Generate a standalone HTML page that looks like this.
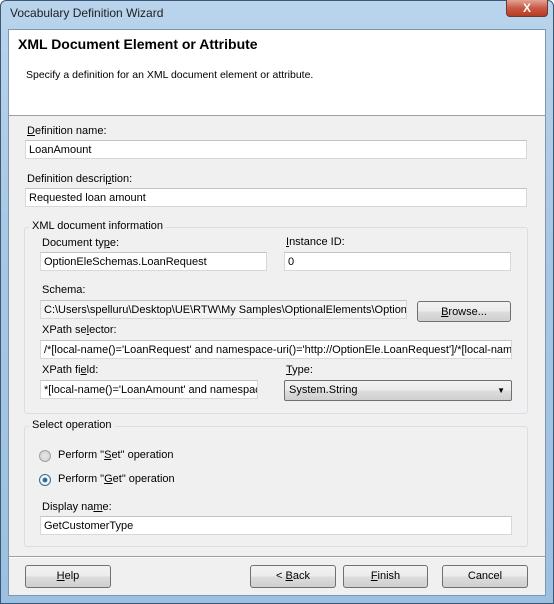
<!DOCTYPE html>
<html><head><style>
*{margin:0;padding:0;box-sizing:border-box}
body{width:554px;height:604px;position:relative;font-family:"Liberation Sans",sans-serif;font-size:11px;color:#000;background:#fff;overflow:hidden}
.a{position:absolute}
.frame{left:0;top:0;width:554px;height:604px;background:linear-gradient(#b9d4ec,#a8c7e4 40%,#9cc0e2);border:1px solid #3b5874;border-radius:6px 6px 0 0}
.client{left:8px;top:29px;width:538px;height:567px;background:#f0f0f0;border:1px solid #7e97ae}
.hdr{left:9px;top:30px;width:536px;height:86px;background:#fff;border-bottom:1px solid #a0a0a0}
.in{position:absolute;background:#fff;border:1px solid #d8d8d8;border-top-color:#c4c4c4;height:19px;padding:3px 0 0 3px;white-space:nowrap;overflow:hidden;font-size:11px}
.lb{position:absolute;font-size:11px;white-space:nowrap}
.grp{position:absolute;border:1px solid #d5dfe5;border-radius:3px}
.gt{position:absolute;background:#f0f0f0;padding:0 3px;font-size:11px}
.btn{position:absolute;height:23px;border:1px solid #707070;border-radius:3px;background:linear-gradient(#f2f2f2 0,#ebebeb 50%,#dddddd 51%,#cfcfcf);text-align:center;line-height:21px;font-size:11px}
u{text-decoration:underline}
</style></head><body>
<div class="a frame"></div>
<div class="a" style="left:10px;top:6px;font-size:12px;color:#1e1e1e">Vocabulary Definition Wizard</div>
<div class="a" style="left:506px;top:0;width:42px;height:17px;background:linear-gradient(#e2a595,#c95a45 50%,#b83b24);border:1px solid #6a3a33;border-top:none;border-radius:0 0 4px 4px;color:#fff;text-align:center;font-weight:bold;font-size:12px;line-height:16px">X</div>
<div class="a client"></div>
<div class="a hdr"></div>
<div class="a" style="left:18px;top:36px;font-size:14px;font-weight:bold">XML Document Element or Attribute</div>
<div class="a" style="left:26px;top:69px;font-size:10.5px">Specify a definition for an XML document element or attribute.</div>

<div class="lb" style="left:27px;top:125px"><u>D</u>efinition name:</div>
<div class="in" style="left:25px;top:140px;width:502px">LoanAmount</div>
<div class="lb" style="left:27px;top:173px">Definition descri<u>p</u>tion:</div>
<div class="in" style="left:25px;top:188px;width:502px">Requested loan amount</div>

<div class="grp" style="left:24px;top:227px;width:504px;height:187px"></div>
<div class="gt" style="left:29px;top:220px">XML document information</div>
<div class="lb" style="left:42px;top:237px">Document ty<u>p</u>e:</div>
<div class="in" style="left:40px;top:252px;width:227px">OptionEleSchemas.LoanRequest</div>
<div class="lb" style="left:286px;top:236px"><u>I</u>nstance ID:</div>
<div class="in" style="left:284px;top:252px;width:227px">0</div>
<div class="lb" style="left:42px;top:284px">Schema:</div>
<div class="in" style="left:40px;top:300px;width:367px;background:#f4f4f4">C:\Users\spelluru\Desktop\UE\RTW\My Samples\OptionalElements\Option</div>
<div class="btn" style="left:417px;top:301px;width:94px;line-height:20px;height:21px"><u>B</u>rowse...</div>
<div class="lb" style="left:42px;top:324px">XPath se<u>l</u>ector:</div>
<div class="in" style="left:40px;top:340px;width:472px">/*[local-name()='LoanRequest' and namespace-uri()='http://OptionEle.LoanRequest']/*[local-name(</div>
<div class="lb" style="left:42px;top:364px">XPath fi<u>e</u>ld:</div>
<div class="in" style="left:40px;top:380px;width:218px">*[local-name()='LoanAmount' and namespace-</div>
<div class="lb" style="left:286px;top:364px"><u>T</u>ype:</div>
<div class="btn" style="left:284px;top:380px;width:228px;height:21px;text-align:left;padding-left:4px;line-height:19px;border-radius:2px">System.String<span style="position:absolute;right:6px;top:0;font-size:8px">▼</span></div>

<div class="grp" style="left:24px;top:426px;width:504px;height:121px"></div>
<div class="gt" style="left:29px;top:419px">Select operation</div>
<div class="a" style="left:39px;top:450px;width:12px;height:12px;border-radius:50%;border:1px solid #a0a0a0;background:radial-gradient(#e8e8e8,#cfcfcf)"></div>
<div class="lb" style="left:58px;top:449px">Perform "<u>S</u>et" operation</div>
<div class="a" style="left:39px;top:474px;width:12px;height:12px;border-radius:50%;border:1px solid #3a6a8e;background:radial-gradient(#1f5f8f 0,#2a7ab0 30%,#fff 40%,#e0e0e0)"></div>
<div class="lb" style="left:58px;top:473px">Perform "<u>G</u>et" operation</div>
<div class="lb" style="left:42px;top:501px">Display na<u>m</u>e:</div>
<div class="in" style="left:40px;top:516px;width:472px">GetCustomerType</div>

<div class="a" style="left:9px;top:556px;width:536px;border-top:1px solid #a0a0a0;border-bottom:1px solid #fff"></div>
<div class="btn" style="left:25px;top:565px;width:86px"><u>H</u>elp</div>
<div class="btn" style="left:250px;top:565px;width:86px">&lt; <u>B</u>ack</div>
<div class="btn" style="left:343px;top:565px;width:85px"><u>F</u>inish</div>
<div class="btn" style="left:442px;top:565px;width:86px">Cancel</div>
</body></html>
